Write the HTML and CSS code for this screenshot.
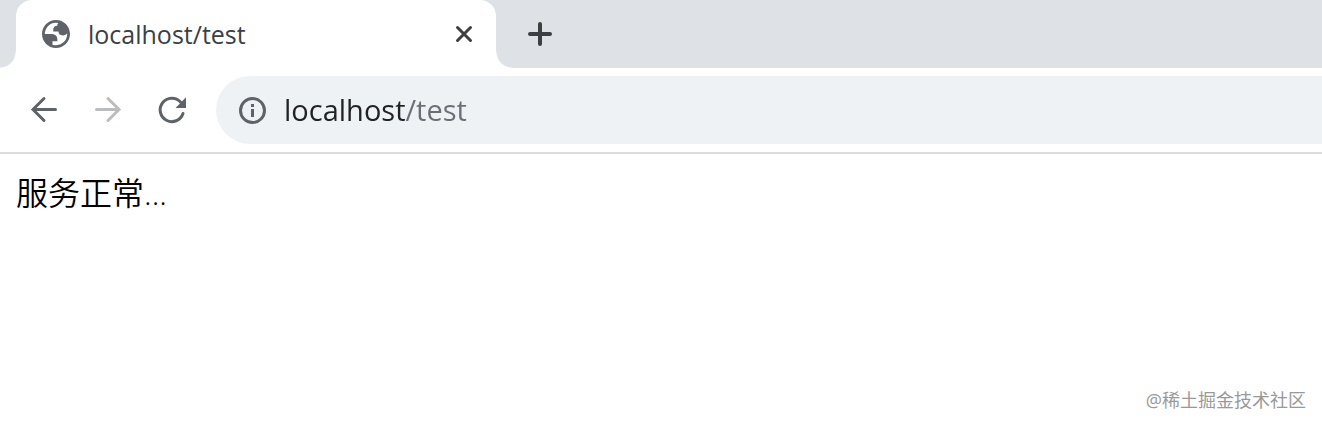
FILE: index.html
```html
<!DOCTYPE html>
<html lang="zh-CN">
<head>
  <meta charset="UTF-8">
  <title>localhost/test</title>
  <meta name="viewport" content="width=device-width, initial-scale=1.0">
  <link rel="stylesheet" href="styles.css">
</head>
<body>

  <header class="browser">
    <div class="tab-strip">
      <div class="tab">
        <svg class="favicon" viewBox="2 2 20 20" aria-hidden="true">
          <path fill="#5f6368" fill-rule="evenodd" d="M12 2C6.48 2 2 6.48 2 12s4.48 10 10 10 10-4.48 10-10S17.52 2 12 2zM4 12h4.4c3.407.022 4.922 1.73 4.543 5.127H9.488v2.47a8.004 8.004 0 0 0 10.498-8.083C19.327 12.504 18.332 13 17 13c-2.137 0-3.206-.916-3.206-2.75h-3.748c-.274-2.728.683-4.092 2.87-4.092 0-.975.327-1.597.811-1.97A8.004 8.004 0 0 0 4 12z"/>
        </svg>
        <span class="tab-title">localhost/test</span>
        <button class="tab-close" aria-label="关闭">
          <svg viewBox="0 0 20 20"><path d="M3.5 3.5 L16.5 16.5 M16.5 3.5 L3.5 16.5"/></svg>
        </button>
      </div>
      <button class="tab-new" aria-label="新标签页">
        <svg viewBox="0 0 28 28"><path d="M14 4 V24 M4 14 H24"/></svg>
      </button>
    </div>

    <nav class="toolbar">
      <button class="nav-button" aria-label="后退">
        <svg viewBox="0 0 32 32"><path d="M27.5 15.5 H5 M16 4.5 L5 15.5 L16 26.5"/></svg>
      </button>
      <button class="nav-button" aria-label="前进" disabled>
        <svg viewBox="0 0 32 32"><path d="M4.5 15.5 H27 M16 4.5 L27 15.5 L16 26.5"/></svg>
      </button>
      <button class="nav-button" aria-label="重新加载">
        <svg viewBox="0 0 32 32">
          <path d="M27 19.5 A11.7 11.7 0 1 1 24.5 8"/>
          <path class="solid" d="M30 3.3 V14 H19.5 Z"/>
        </svg>
      </button>
      <div class="address">
        <svg class="info" viewBox="0 0 28 28" aria-hidden="true">
          <circle cx="14.5" cy="14.5" r="12"/>
          <path d="M14.5 8 V11 M14.5 13 V21"/>
        </svg>
        <input class="url" type="text" value="localhost/test" aria-label="地址" spellcheck="false">
      </div>
    </nav>
  </header>

  <main class="page">服务正常...</main>

  <footer class="watermark">@稀土掘金技术社区</footer>

</body>
</html>
```

FILE: styles.css
```css
html, body {
  margin: 0;
  height: 100%;
}

body {
  display: flex;
  flex-direction: column;
  background: #fff;
  color: #000;
  font-family: "Open Sans", "Noto Sans CJK SC", sans-serif;
}

button {
  display: flex;
  align-items: center;
  justify-content: center;
  padding: 0;
  border: none;
  background: none;
  cursor: pointer;
}

svg {
  display: block;
  flex: none;
}

.browser {
  border-bottom: 2px solid #dadcde;
}

.tab-strip {
  display: flex;
  height: 68px;
  padding: 0 16px;
  background: #dee1e6;
}

.tab {
  position: relative;
  display: flex;
  align-items: center;
  box-sizing: border-box;
  width: 480px;
  padding: 0 20px 0 26px;
  border-radius: 16px 16px 0 0;
  background: #fff;
}

/* outward curves at the foot of the tab */
.tab::before,
.tab::after {
  content: "";
  position: absolute;
  bottom: 0;
  width: 16px;
  height: 16px;
}

.tab::before {
  right: 100%;
  background: radial-gradient(circle at 0 0, transparent 15px, #fff 16px);
}

.tab::after {
  left: 100%;
  background: radial-gradient(circle at 100% 0, transparent 15px, #fff 16px);
}

.favicon {
  width: 28px;
  height: 28px;
}

.tab-title {
  flex: 1;
  margin-left: 18px;
  color: #3c4043;
  font-size: 25px;
  line-height: 32px;
}

.tab-close {
  width: 24px;
  height: 24px;
}

.tab-close svg {
  width: 20px;
  height: 20px;
}

.tab-close path,
.tab-new path {
  fill: none;
  stroke: #3c4043;
  stroke-width: 3;
  stroke-linecap: round;
}

.tab-new {
  width: 56px;
  margin-left: 16px;
}

.tab-new svg {
  width: 28px;
  height: 28px;
}

.tab-new path {
  stroke-width: 4;
}

.toolbar {
  display: flex;
  align-items: center;
  padding: 8px 0 8px 12px;
}

.nav-button {
  width: 64px;
  height: 64px;
}

.nav-button svg {
  width: 32px;
  height: 32px;
}

.nav-button path {
  fill: none;
  stroke: #5f6368;
  stroke-width: 3;
  stroke-linecap: round;
}

.nav-button .solid {
  fill: #5f6368;
  stroke: none;
}

.nav-button:disabled path {
  stroke: #babcbe;
}

.address {
  display: flex;
  flex: 1;
  align-items: center;
  height: 68px;
  margin-left: 12px;
  padding-left: 22px;
  border-radius: 34px 0 0 34px;
  background: #eff2f5;
}

.info {
  width: 28px;
  height: 28px;
  fill: none;
  stroke: #5f6368;
  stroke-width: 3;
}

/* host dark, path grey */
.url {
  flex: 1;
  margin: 0 0 0 18px;
  padding: 0;
  border: none;
  outline: none;
  background: linear-gradient(to right, #202124 121px, #6b6f74 121px);
  background-clip: text;
  -webkit-background-clip: text;
  -webkit-text-fill-color: transparent;
  font-family: inherit;
  font-size: 29px;
  line-height: 40px;
}

.page {
  flex: 1;
  padding: 16px;
  font-size: 32px;
  font-weight: 350;
  line-height: 46px;
}

.watermark {
  padding: 0 16px 12px;
  color: #999;
  font-size: 18px;
  line-height: 28px;
  text-align: right;
}
```
